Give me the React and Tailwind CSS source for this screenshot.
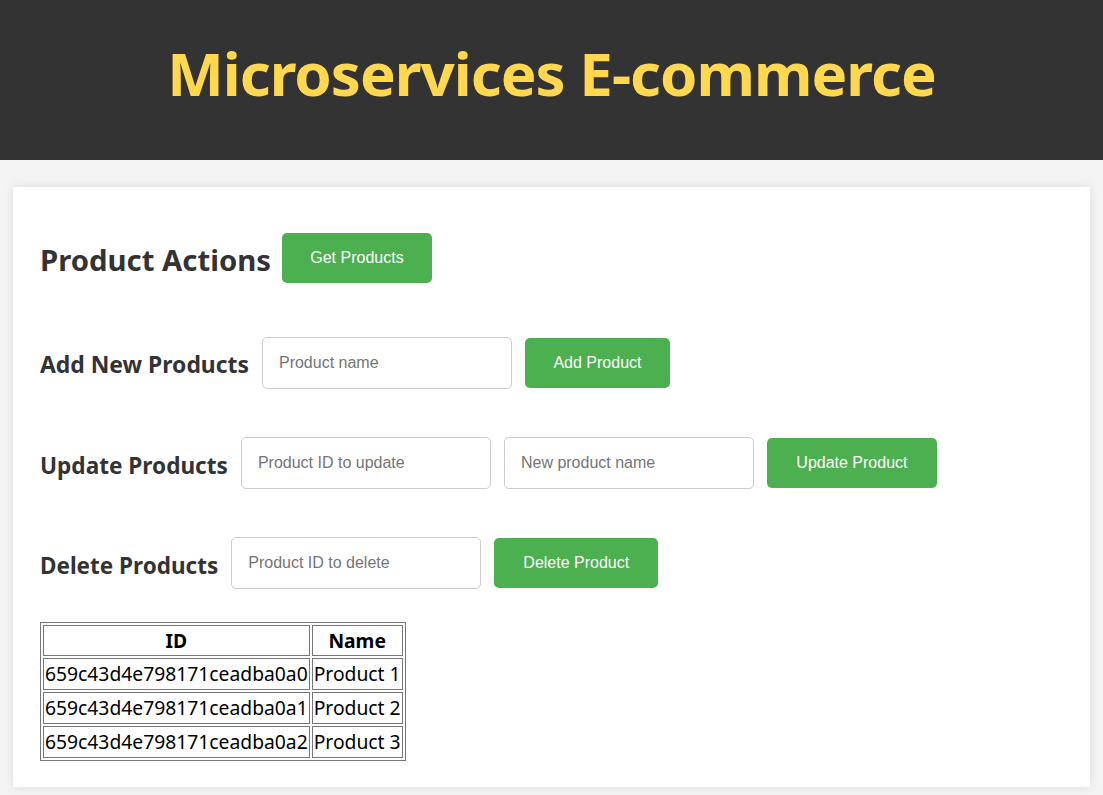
import React from 'react';

const products = [
    { id: '659c43d4e798171ceadba0a0', name: 'Product 1' },
    { id: '659c43d4e798171ceadba0a1', name: 'Product 2' },
    { id: '659c43d4e798171ceadba0a2', name: 'Product 3' },
];

const heading = "font-['Noto_Sans',sans-serif] font-bold text-[#333] pt-[5px]";
const btn = "h-[50px] rounded-[5px] bg-[#4caf50] text-white text-[16px] font-['Liberation_Sans',Arial,sans-serif]";
const input = "h-[52px] w-[250px] rounded-[5px] border border-[#ccc] px-4 text-[16px] font-['Liberation_Sans',Arial,sans-serif] placeholder:text-[#757575] outline-none";

export default function App() {
    return (
        <div className="min-h-screen bg-[#f4f4f4] pb-4">
            {/* Header */}
            <header className="h-[160px] bg-[#333] flex items-center justify-center pb-[14px]">
                <h1 className="font-['Noto_Sans',sans-serif] font-bold text-[60px] text-[#ffd850] tracking-[-1px]">
                    Microservices E-commerce
                </h1>
            </header>

            {/* Main card */}
            <main className="mx-[13px] mt-[27px] bg-white shadow-[0_0_10px_rgba(0,0,0,0.1)] px-[27px] pt-[46px] pb-[26px]">
                <div className="flex items-center gap-[12px]">
                    <h2 className={`${heading} text-[29.3px]`}>Product Actions</h2>
                    <button className={`${btn} w-[150px] -ml-px`}>Get Products</button>
                </div>

                <div className="flex items-center gap-[13px] mt-[54px]">
                    <h3 className={`${heading} text-[22.9px]`}>Add New Products</h3>
                    <input className={input} placeholder="Product name" />
                    <button className={`${btn} w-[145px]`}>Add Product</button>
                </div>

                <div className="flex items-center gap-[13px] mt-[48px]">
                    <h3 className={`${heading} text-[22.6px]`}>Update Products</h3>
                    <input className={input} placeholder="Product ID to update" />
                    <input className={input} placeholder="New product name" />
                    <button className={`${btn} w-[170px]`}>Update Product</button>
                </div>

                <div className="flex items-center gap-[13px] mt-[48px]">
                    <h3 className={`${heading} text-[22.5px]`}>Delete Products</h3>
                    <input className={input} placeholder="Product ID to delete" />
                    <button className={`${btn} w-[164px]`}>Delete Product</button>
                </div>

                {/* Products table */}
                <table className="mt-[33px] border border-[#777] border-separate border-spacing-[2px] font-['Noto_Sans',sans-serif] text-[19.3px] text-black">
                    <thead>
                        <tr>
                            <th className="border border-[#777] px-px leading-[29px]">ID</th>
                            <th className="border border-[#777] px-px leading-[29px]">Name</th>
                        </tr>
                    </thead>
                    <tbody>
                        {products.map((p) => (
                            <tr key={p.id}>
                                <td className="border border-[#777] px-px leading-[30px]">{p.id}</td>
                                <td className="border border-[#777] px-px leading-[30px]">{p.name}</td>
                            </tr>
                        ))}
                    </tbody>
                </table>
            </main>
        </div>
    );
}
